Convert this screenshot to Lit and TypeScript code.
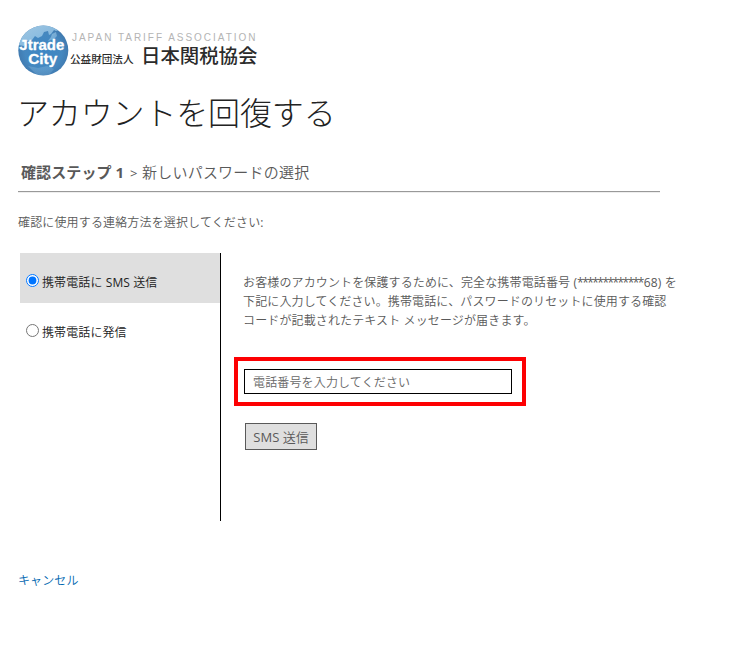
import { LitElement, html, css, svg } from "lit";
import { customElement, state } from "lit/decorators.js";

@customElement("brand-logo")
class BrandLogo extends LitElement {
  static styles = css`
    :host { display: flex; height: 52px; }
    .globe { display: block; width: 52px; height: 52px; flex: none; }
    .names { display: flex; flex-direction: column; margin-left: 2px; padding-top: 8px; white-space: nowrap; }
    .english { font: 10px/10px "Liberation Sans", Arial, sans-serif; letter-spacing: 1.97px; color: #b4b4b4; }
    .japanese { display: flex; align-items: baseline; font-family: "Noto Sans CJK JP", sans-serif; color: #2b2b2b; line-height: 24px; margin-left: -2px; }
    .kind { font-size: 10.6px; font-weight: 500; width: 71px; }
    .name { font-size: 19.4px; font-weight: 500; }
  `;
  render() {
    return html`
      <svg class="globe" viewBox="0 0 52 52">
        <defs>
          <radialGradient id="sea" cx="50%" cy="52%" r="52%">
            <stop offset="0" stop-color="#3d86c4" />
            <stop offset="0.7" stop-color="#4588c0" />
            <stop offset="1" stop-color="#4079ae" />
          </radialGradient>
          <linearGradient id="haze" x1="0" y1="0" x2="1" y2="1">
            <stop offset="0" stop-color="#b4d8ee" />
            <stop offset="1" stop-color="#7fb5de" />
          </linearGradient>
          <clipPath id="disc"><circle cx="25.3" cy="25.5" r="25" /></clipPath>
        </defs>
        <circle cx="25.3" cy="25.5" r="25" fill="url(#sea)" />
        ${svg`<g clip-path="url(#disc)" fill="url(#haze)">
          <path d="M0 20 L0 0 L35 0 L41 5 L38 6 L36 5 L33 9 L31 10 L30 6 L26 7 L24 11 L20 13 L17 11 L14 15 L9 16 L6 21Z" opacity=".85" />
          <path d="M34 9 L38 7 L39 11 L36 14 L33 15 L30 16 L33 12Z" opacity=".6" />
          <path d="M10 41 L20 43 L29 41 L36 44 L31 50 L19 50Z" opacity=".25" />
        </g>`}
        <g fill="#fff" stroke="#fff" stroke-width="0.3" font-family="Liberation Sans, Arial, sans-serif" font-size="15.5" font-weight="700" text-anchor="middle">
          <text x="23.8" y="25.4" textLength="45" lengthAdjust="spacingAndGlyphs">Jtrade</text>
          <text x="24.7" y="39.2" textLength="29" lengthAdjust="spacingAndGlyphs">City</text>
        </g>
      </svg>
      <div class="names">
        <div class="english">JAPAN TARIFF ASSOCIATION</div>
        <div class="japanese"><span class="kind">公益財団法人</span><span class="name">日本関税協会</span></div>
      </div>
    `;
  }
}

@customElement("app-root")
class AppRoot extends LitElement {
  @state() private method = "sms";

  static styles = css`
    :host {
      display: block; box-sizing: border-box; height: 655px; padding: 25px 0 0 18px; background: #fff;
      color: #595959; font: 350 12px/19px "Open Sans", "Noto Sans CJK JP", sans-serif; overflow: hidden;
    }
    h1 { margin: 12px 0 0 -1px; font-size: 32px; line-height: 48px; font-weight: 300; color: #222; letter-spacing: -0.15px; white-space: nowrap; }
    .steps { display: flex; align-items: baseline; width: 642px; height: 31px; box-sizing: content-box; margin-top: 23px; border-bottom: 1px solid #999; box-shadow: 0 1px #eee; font-size: 15px; line-height: 24px; white-space: nowrap; }
    .current { width: 109px; margin-left: 3px; font-weight: 700; letter-spacing: 0.1px; }
    .arrow { width: 12px; font-size: 13px; font-weight: 400; }
    .next { letter-spacing: 0.22px; }
    .prompt { margin: 21px 0 0; letter-spacing: 0.15px; }
    .panel { display: flex; height: 268px; margin: 21px 0 0 2px; }
    .methods { width: 200px; border-right: 1px solid #000; color: #222; letter-spacing: 0.1px; }
    .method { display: flex; align-items: center; box-sizing: border-box; height: 50px; padding: 8px 0 0 6px; }
    .method.selected { background: #dfdfdf; }
    .method input { width: 13px; height: 13px; margin: -3px 3px 0 0; }
    .form { padding: 20px 0 0 22px; }
    .info { margin: 0; white-space: nowrap; letter-spacing: 0.13px; }
    .latin { font-weight: 400; }
    .mask { letter-spacing: -1.55px; margin-right: 1px; }
    .highlight { box-sizing: border-box; width: 292px; height: 49px; margin: 27px 0 0 -9px; padding: 8px 6px; border: 4px solid #fd0002; }
    .phone { display: block; box-sizing: border-box; width: 268px; height: 25px; padding: 1px 8px 0; border: 1px solid #000; border-radius: 0; background: #fff; font: inherit; font-size: 12px; letter-spacing: 0.15px; outline: none; }
    .phone::placeholder { color: #686868; opacity: 1; }
    .send { display: block; box-sizing: border-box; width: 72px; height: 27px; margin: 17px 0 0 2px; padding: 2px 0 0; border: 1px solid #595959; border-radius: 0; background: #dfdfdf; color: #595959; font: inherit; font-size: 13px; line-height: 19px; }
    .cancel { display: inline-block; margin-top: 50px; color: #0067b0; text-decoration: none; letter-spacing: 0.1px; }
  `;

  private option(id: string, label: unknown) {
    const on = this.method === id;
    return html`<label class="method ${on ? "selected" : ""}">
      <input type="radio" name="method" .checked=${on} @change=${() => (this.method = id)} /><span>${label}</span>
    </label>`;
  }

  render() {
    return html`
      <brand-logo></brand-logo>
      <h1>アカウントを回復する</h1>
      <div class="steps">
        <span class="current">確認ステップ 1</span><span class="arrow">&gt;</span><span class="next">新しいパスワードの選択</span>
      </div>
      <p class="prompt">確認に使用する連絡方法を選択してください<span class="latin">:</span></p>
      <div class="panel">
        <div class="methods">
          ${this.option("sms", html`携帯電話に <span class="latin">SMS</span> 送信`)}
          ${this.option("call", "携帯電話に発信")}
        </div>
        <div class="form">
          <p class="info">お客様のアカウントを保護するために、完全な携帯電話番号 <span class="latin">(<span class="mask">*************</span>68)</span> を<br />下記に入力してください。携帯電話に、パスワードのリセットに使用する確認<br />コードが記載されたテキスト メッセージが届きます。</p>
          <div class="highlight"><input class="phone" placeholder="電話番号を入力してください" /></div>
          <button class="send"><span class="latin">SMS</span> 送信</button>
        </div>
      </div>
      <a class="cancel" href="#">キャンセル</a>
    `;
  }
}
